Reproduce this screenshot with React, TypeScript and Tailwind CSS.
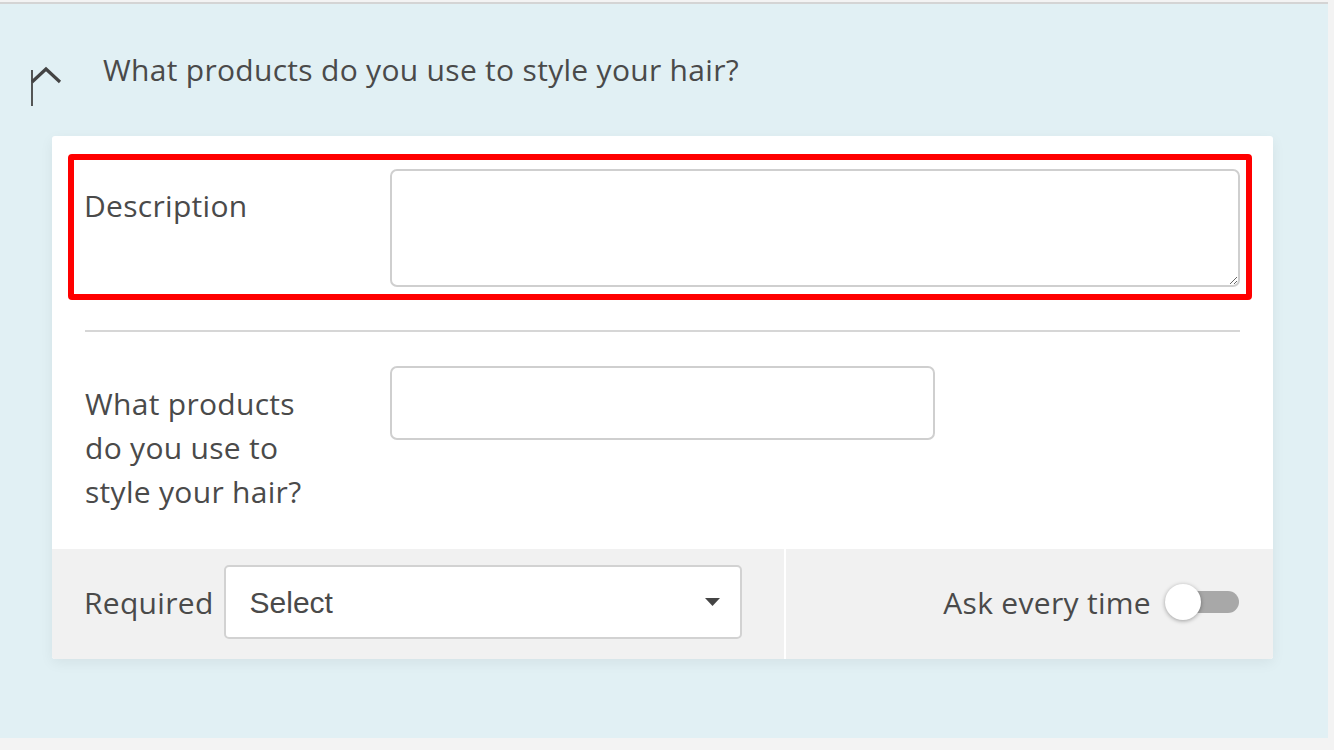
import React from 'react';

const font = { fontFamily: '"Open Sans", Lato, sans-serif' };

function Chevron() {
  return (
    <svg width="34" height="42" viewBox="0 0 34 42" className="shrink-0">
      <line x1="2" y1="4" x2="2" y2="40" stroke="#444" strokeWidth="1.8" />
      <polyline points="2,16 16,3 30,16" fill="none" stroke="#444" strokeWidth="3.2" />
    </svg>
  );
}

function Toggle() {
  return (
    <div className="relative w-[76px] h-[36px] flex items-center">
      <div className="ml-[18px] w-[56px] h-[22px] rounded-full bg-[#a8a8a8]" />
      <div className="absolute left-0 top-0 w-[36px] h-[36px] rounded-full bg-white shadow-[0_1px_4px_rgba(0,0,0,0.35)]" />
    </div>
  );
}

export default function App() {
  return (
    <div className="w-[1334px] h-[750px] bg-[#f3f3f3] overflow-hidden text-[#4a4a4a] tracking-[0.3px]" style={font}>
      <div className="w-[1328px] h-[736px] mt-[2px] border-t-2 border-[#d4d4d4] bg-[#e1f0f4] pt-[44px]">
        <div className="flex items-start pl-[30px] h-[88px]">
          <div className="mt-[18px]">
            <Chevron />
          </div>
          <h2 className="ml-[39px] text-[30px] leading-[44px]">What products do you use to style your hair?</h2>
        </div>

        <div className="ml-[52px] w-[1221px] bg-white rounded-[3px] shadow-[0_4px_14px_rgba(0,0,0,0.06)] pt-[18px] overflow-hidden">
          <div className="ml-[16px] mr-[21px] border-[6px] border-[#ff0000] rounded-[4px] flex pl-[10px] pr-[6px] pt-[9px] pb-[7px]">
            <label className="w-[306px] text-[30px] leading-[44px] pt-[15px]">Description</label>
            <textarea className="flex-1 h-[118px] border-2 border-[#cfcfcf] rounded-[7px] outline-none resize-y" />
          </div>

          <div className="mx-[33px] mt-[30px] border-t-2 border-[#d6d6d6]" />

          <div className="flex pl-[33px] pt-[34px] pb-[35px]">
            <label className="w-[305px] text-[30px] leading-[44px] pt-[16px]">
              What products<br />do you use to<br />style your hair?
            </label>
            <input className="w-[545px] h-[74px] border-2 border-[#cfcfcf] rounded-[7px] outline-none" />
          </div>

          <div className="flex h-[110px] bg-[#f1f1f1]">
            <div className="w-[734px] flex items-center pl-[32px] pb-[4px] border-r-2 border-white">
              <span className="text-[30px] mr-[10px]">Required</span>
              <div className="w-[518px] h-[74px] bg-white border-2 border-[#d2d2d2] rounded-[5px] flex items-center justify-between pl-[24px] pr-[20px]">
                <span className="text-[30px] tracking-normal text-[#4a4a4a]" style={{ fontFamily: '"Liberation Sans", Arial, sans-serif' }}>Select</span>
                <svg width="15" height="8" viewBox="0 0 15 8"><polygon points="0,0 15,0 7.5,8" fill="#444" /></svg>
              </div>
            </div>
            <div className="flex-1 flex items-center justify-end pr-[32px] pb-[4px]">
              <span className="text-[30px] mr-[14px]">Ask every time</span>
              <Toggle />
            </div>
          </div>
        </div>
      </div>
    </div>
  );
}
